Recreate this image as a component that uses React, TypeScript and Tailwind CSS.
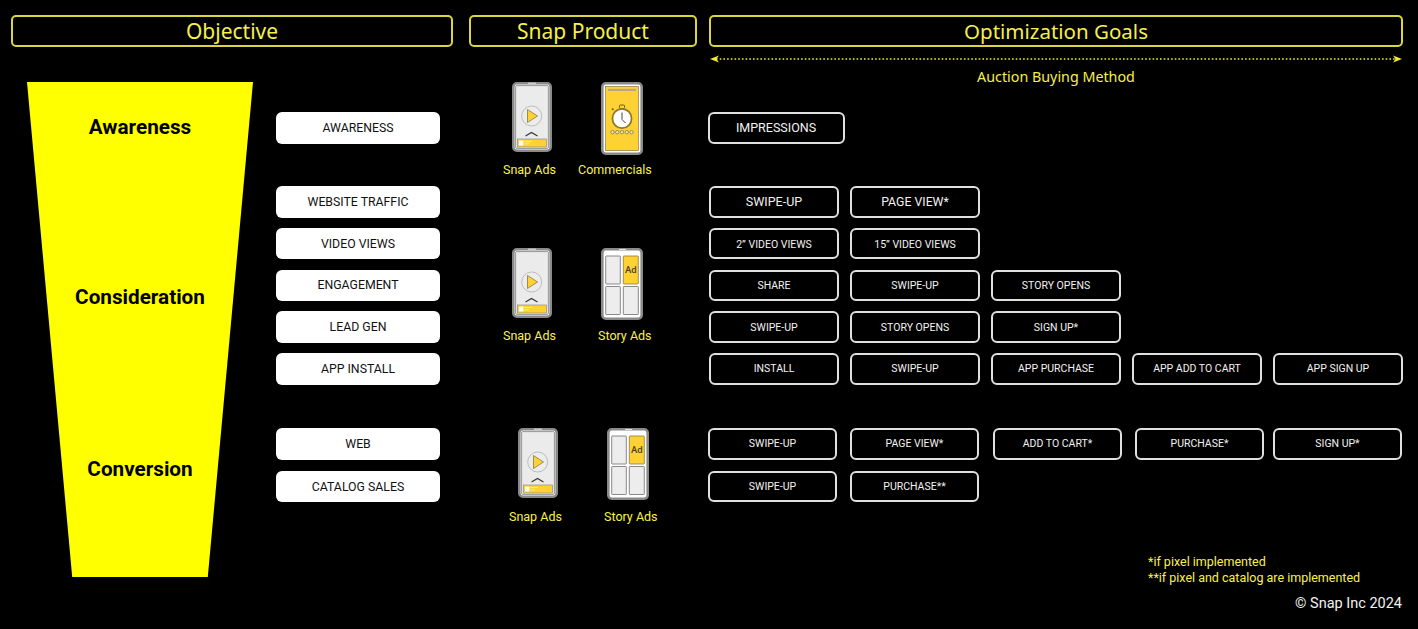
const headerFont = "font-['Noto_Sans',sans-serif]";

function HeaderBox({ label, className }: { label: string; className: string }) {
  return (
    <div
      className={`h-[32px] flex items-center justify-center rounded-[5px] border-2 border-[#dcd63c] text-[#f5f04c] font-normal ${headerFont} ${className}`}
    >
      {label}
    </div>
  );
}

function Objective({ label, className = "" }: { label: string; className?: string }) {
  return (
    <div className={`h-[31.5px] w-[164px] flex items-center justify-center rounded-[6px] bg-white text-[12.3px] text-[#111] ${className}`}>
      {label}
    </div>
  );
}

function Goal({ label, className = "" }: { label: string; className?: string }) {
  return (
    <div
      className={`h-[31.5px] w-[129px] shrink-0 flex items-center justify-center rounded-[6px] border-2 border-[#e0e0e0] text-[10.5px] text-[#f2f2f2] ${className}`}
    >
      {label}
    </div>
  );
}

function GoalRow({ children, className = "gap-[11px] [&>div]:pt-px [&>div]:w-[130px]" }: { children: React.ReactNode; className?: string }) {
  return <div className={`flex ${className}`}>{children}</div>;
}

function SnapAdIcon() {
  return (
    <svg width="40" height="70" viewBox="0 0 40 70">
      <rect x="1.3" y="1.3" width="37.4" height="67.4" rx="3.5" fill="#fff" stroke="#8a8a8a" strokeWidth="2.6" />
      <rect x="16" y="0.6" width="8" height="1.4" fill="#c8c8c8" />
      <rect x="3.6" y="3.6" width="32.8" height="62.8" rx="1" fill="#ebebeb" stroke="#6d6d6d" strokeWidth="0.7" />
      <circle cx="19.7" cy="34" r="10" fill="#ececec" stroke="#b0b0b0" strokeWidth="0.8" />
      <path d="M15.5 27.5 L25.5 34 L15.5 40.5 Z" fill="#ffd233" stroke="#77683a" strokeWidth="0.7" />
      <path d="M13.5 54 L19.5 50.5 L25.5 54" fill="none" stroke="#333" strokeWidth="1.1" />
      <rect x="5.4" y="57" width="29" height="8" fill="#ffd233" stroke="#8d8d8d" strokeWidth="0.7" />
      <rect x="7" y="58.6" width="4.4" height="4.8" fill="#fff" />
      <path d="M12.5 59.5 H20 M12.5 61.8 H17" stroke="#f8efc8" strokeWidth="0.8" />
    </svg>
  );
}

function CommercialIcon() {
  return (
    <svg width="42" height="73" viewBox="0 0 42 73">
      <rect x="1.3" y="1.3" width="39.4" height="70.4" rx="3.5" fill="#fff" stroke="#8a8a8a" strokeWidth="2.6" />
      <rect x="4.6" y="4.4" width="32.8" height="64.2" fill="#ffd233" stroke="#77683a" strokeWidth="0.6" />
      <rect x="7" y="6.8" width="28" height="2.2" fill="#b3a88a" />
      <rect x="18.5" y="23" width="5" height="3.5" rx="1" fill="none" stroke="#6e5c1e" strokeWidth="1" />
      <path d="M12.5 28 L11 26.5" stroke="#6e5c1e" strokeWidth="1.5" />
      <circle cx="21" cy="36.5" r="9.6" fill="#fff" stroke="#8f7a24" strokeWidth="1.8" />
      <path d="M21 30.5 V37.5 L24.5 41" fill="none" stroke="#444" strokeWidth="1" />
      {[11.5, 16.2, 21, 25.8, 30.5].map((cx) => (
        <circle key={cx} cx={cx} cy="50.2" r="1.7" fill="#f5e6a8" stroke="#6b6b55" strokeWidth="0.7" />
      ))}
    </svg>
  );
}

function StoryAdIcon() {
  return (
    <svg width="42" height="72" viewBox="0 0 42 72">
      <rect x="1.3" y="1.3" width="39.4" height="69.4" rx="3.5" fill="#fff" stroke="#8a8a8a" strokeWidth="2.6" />
      <rect x="18" y="1" width="7" height="1" fill="#e2e2e2" />
      <rect x="4.7" y="8" width="14.6" height="28" rx="0.6" fill="#ededed" stroke="#6d6d6d" strokeWidth="0.8" />
      <rect x="22.3" y="8" width="15" height="28" rx="0.6" fill="#ffd233" stroke="#8a7a3c" strokeWidth="0.8" />
      <rect x="4.7" y="38.5" width="14.6" height="28" rx="0.6" fill="#ededed" stroke="#6d6d6d" strokeWidth="0.8" />
      <rect x="22.3" y="38.5" width="15" height="28" rx="0.6" fill="#ededed" stroke="#6d6d6d" strokeWidth="0.8" />
      <text x="29.8" y="25" textAnchor="middle" fontSize="9.5" fontWeight="500" fontFamily="Roboto, sans-serif" fill="#4a4520">
        Ad
      </text>
    </svg>
  );
}

function Label({ children, className }: { children: React.ReactNode; className: string }) {
  return <div className={`text-[12.5px] leading-[14px] text-[#faf24a] whitespace-nowrap ${className}`}>{children}</div>;
}

export default function App() {
  return (
    <div className="w-[1418px] h-[629px] bg-black overflow-hidden font-['Roboto',sans-serif]">
      {/* column headers */}
      <div className="flex pt-[15px] pl-[11px]">
        <HeaderBox label="Objective" className="w-[442px] text-[21px] pt-[2px]" />
        <HeaderBox label="Snap Product" className="w-[228px] ml-[16px] text-[21px] pt-[2px]" />
        <HeaderBox label="Optimization Goals" className="w-[694px] ml-[12px] text-[20.5px]" />
      </div>
      <div className="ml-[710px] w-[692px] h-[35px] pt-[8px]">
        <div className="relative h-[8px] flex items-center">
          <svg className="absolute left-0 top-0" width="692" height="8" viewBox="0 0 692 8">
            <line x1="6" y1="4" x2="686" y2="4" stroke="#f5ec30" strokeWidth="1.6" strokeDasharray="1.6 2.1" />
            <path d="M0 4 L9 0.5 L6.5 4 L9 7.5 Z" fill="#f5ec30" />
            <path d="M692 4 L683 0.5 L685.5 4 L683 7.5 Z" fill="#f5ec30" />
          </svg>
        </div>
        <div className={`text-center text-[14.3px] leading-[20px] mt-[4px] text-[#f5f04c] ${headerFont}`}>
          Auction Buying Method
        </div>
      </div>

      <div className="flex pl-[27px]">
        {/* funnel */}
        <div className="w-[226px] h-[495px] shrink-0 bg-[#ffff00] [clip-path:polygon(0_0,100%_0,80%_100%,20%_100%)] flex flex-col items-center text-black text-[20.7px] leading-[28px] font-bold">
          <div className="mt-[31px]">Awareness</div>
          <div className="mt-[142px]">Consideration</div>
          <div className="mt-[144px]">Conversion</div>
        </div>

        <div className="flex flex-col ml-[23px]">
          {/* awareness */}
          <div className="flex h-[104px]">
            <div className="pt-[30px]">
              <Objective label="AWARENESS" />
            </div>
            <div className="w-[267.5px] flex shrink-0">
              <div className="w-[120px]">
                <div className="ml-[72px]"><SnapAdIcon /></div>
                <Label className="ml-[63px] mt-[11px]">Snap Ads</Label>
              </div>
              <div>
                <div className="ml-[41px]"><CommercialIcon /></div>
                <Label className="ml-[18px] mt-[8px]">Commercials</Label>
              </div>
            </div>
            <div className="pt-[30px]">
              <Goal label="IMPRESSIONS" className="w-[137px] text-[12.5px] pt-px" />
            </div>
          </div>

          {/* consideration */}
          <div className="flex h-[242px]">
            <div className="flex flex-col gap-[10.25px]">
              <Objective label="WEBSITE TRAFFIC" />
              <Objective label="VIDEO VIEWS" className="pt-px" />
              <Objective label="ENGAGEMENT" />
              <Objective label="LEAD GEN" />
              <Objective label="APP INSTALL" />
            </div>
            <div className="w-[269px] flex shrink-0 pt-[62px]">
              <div className="w-[120px]">
                <div className="ml-[72px]"><SnapAdIcon /></div>
                <Label className="ml-[63px] mt-[11px]">Snap Ads</Label>
              </div>
              <div>
                <div className="ml-[41px]"><StoryAdIcon /></div>
                <Label className="ml-[38px] mt-[9px]">Story Ads</Label>
              </div>
            </div>
            <div className="flex flex-col gap-[10.25px]">
              <GoalRow>
                <Goal label="SWIPE-UP" className="text-[12.5px]" />
                <Goal label="PAGE VIEW*" className="text-[12.3px]" />
              </GoalRow>
              <GoalRow className="gap-[11px] [&>div]:pt-[2px] [&>div]:w-[130px]">
                <Goal label="2” VIDEO VIEWS" />
                <Goal label="15” VIDEO VIEWS" />
              </GoalRow>
              <GoalRow>
                <Goal label="SHARE" />
                <Goal label="SWIPE-UP" />
                <Goal label="STORY OPENS" />
              </GoalRow>
              <GoalRow>
                <Goal label="SWIPE-UP" />
                <Goal label="STORY OPENS" />
                <Goal label="SIGN UP*" />
              </GoalRow>
              <GoalRow>
                <Goal label="INSTALL" />
                <Goal label="SWIPE-UP" />
                <Goal label="APP PURCHASE" />
                <Goal label="APP ADD TO CART" />
                <Goal label="APP SIGN UP" />
              </GoalRow>
            </div>
          </div>

          {/* conversion */}
          <div className="flex">
            <div className="flex flex-col gap-[11px]">
              <Objective label="WEB" />
              <Objective label="CATALOG SALES" className="pt-[2px]" />
            </div>
            <div className="w-[268px] flex shrink-0">
              <div className="w-[120px]">
                <div className="ml-[78px]"><SnapAdIcon /></div>
                <Label className="ml-[69px] mt-[12px]">Snap Ads</Label>
              </div>
              <div>
                <div className="ml-[47px]"><StoryAdIcon /></div>
                <Label className="ml-[44px] mt-[10px]">Story Ads</Label>
              </div>
            </div>
            <div className="flex flex-col gap-[11px]">
              <GoalRow className="">
                <Goal label="SWIPE-UP" />
                <Goal label="PAGE VIEW*" className="ml-[13px]" />
                <Goal label="ADD TO CART*" className="ml-[14px]" />
                <Goal label="PURCHASE*" className="ml-[13px]" />
                <Goal label="SIGN UP*" className="ml-[9px]" />
              </GoalRow>
              <GoalRow className="[&>div]:pt-[2px]">
                <Goal label="SWIPE-UP" />
                <Goal label="PURCHASE**" className="ml-[13px]" />
              </GoalRow>
              <div className="ml-[440px] mt-[41px] text-[12.5px] leading-[16px] text-[#faf24a]">
                <div>*if pixel implemented</div>
                <div>**if pixel and catalog are implemented</div>
              </div>
              <div className="text-right text-[14.5px] leading-[18px] text-[#f2f2f2] mt-[-2px]">© Snap Inc 2024</div>
            </div>
          </div>
        </div>
      </div>
    </div>
  );
}
